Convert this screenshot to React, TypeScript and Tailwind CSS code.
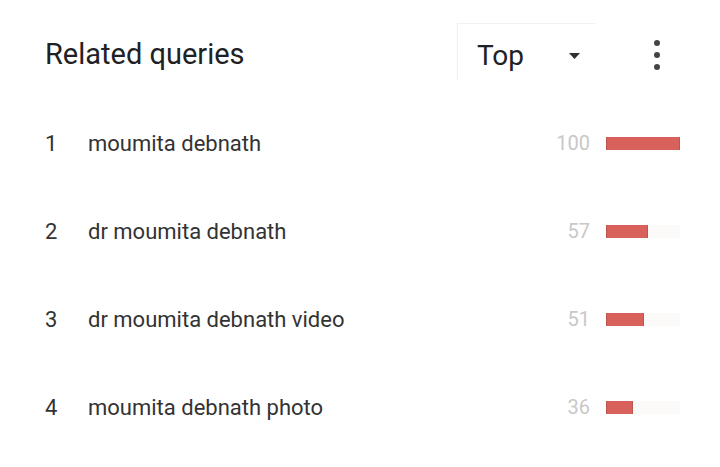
const queries = [
  { rank: 1, label: "moumita debnath", value: 100 },
  { rank: 2, label: "dr moumita debnath", value: 57 },
  { rank: 3, label: "dr moumita debnath video", value: 51 },
  { rank: 4, label: "moumita debnath photo", value: 36 },
];

export default function App() {
  return (
    <main className="w-[720px] h-[467px] bg-white text-[#202124] font-['Roboto',sans-serif] overflow-hidden">
      {/* HEADER */}
      <div className="flex items-center h-[99px] pt-[11px] pl-[45px] pr-[43px]">
        <h2 className="flex-1 text-[29px]">Related queries</h2>
        <div className="flex items-center w-[138px] h-[57px] -mt-[7px] pt-[7px] pl-[19px] pr-[15px] border-l border-t border-[#f1f1f1]">
          <span className="flex-1 text-[28px]">Top</span>
          <svg width="11" height="6" viewBox="0 0 11 6">
            <path d="M0 0h11L5.5 6z" fill="#303030" />
          </svg>
        </div>
        <div className="w-[40px] ml-[42px] flex flex-col items-center gap-[6px]">
          <span className="w-[6px] h-[6px] rounded-full bg-[#444]" />
          <span className="w-[6px] h-[6px] rounded-full bg-[#444]" />
          <span className="w-[6px] h-[6px] rounded-full bg-[#444]" />
        </div>
      </div>

      {/* ROWS */}
      {queries.map((q) => (
        <div key={q.rank} className="flex items-center h-[88px] pl-[45px] pr-[40px]">
          <span className="w-[43px] text-[22px] text-[#333]">{q.rank}</span>
          <span className="flex-1 text-[22px] text-[#333]">{q.label}</span>
          <span className="text-[20px] text-[#c8c8c8] mr-[16px]">{q.value}</span>
          <div className="w-[74px] h-[13px] bg-[#fcf9f9]">
            <div
              className="h-full bg-[#d9615b] border-x border-[#b85650]"
              style={{ width: `${q.value * 0.74}px` }}
            />
          </div>
        </div>
      ))}
    </main>
  );
}
